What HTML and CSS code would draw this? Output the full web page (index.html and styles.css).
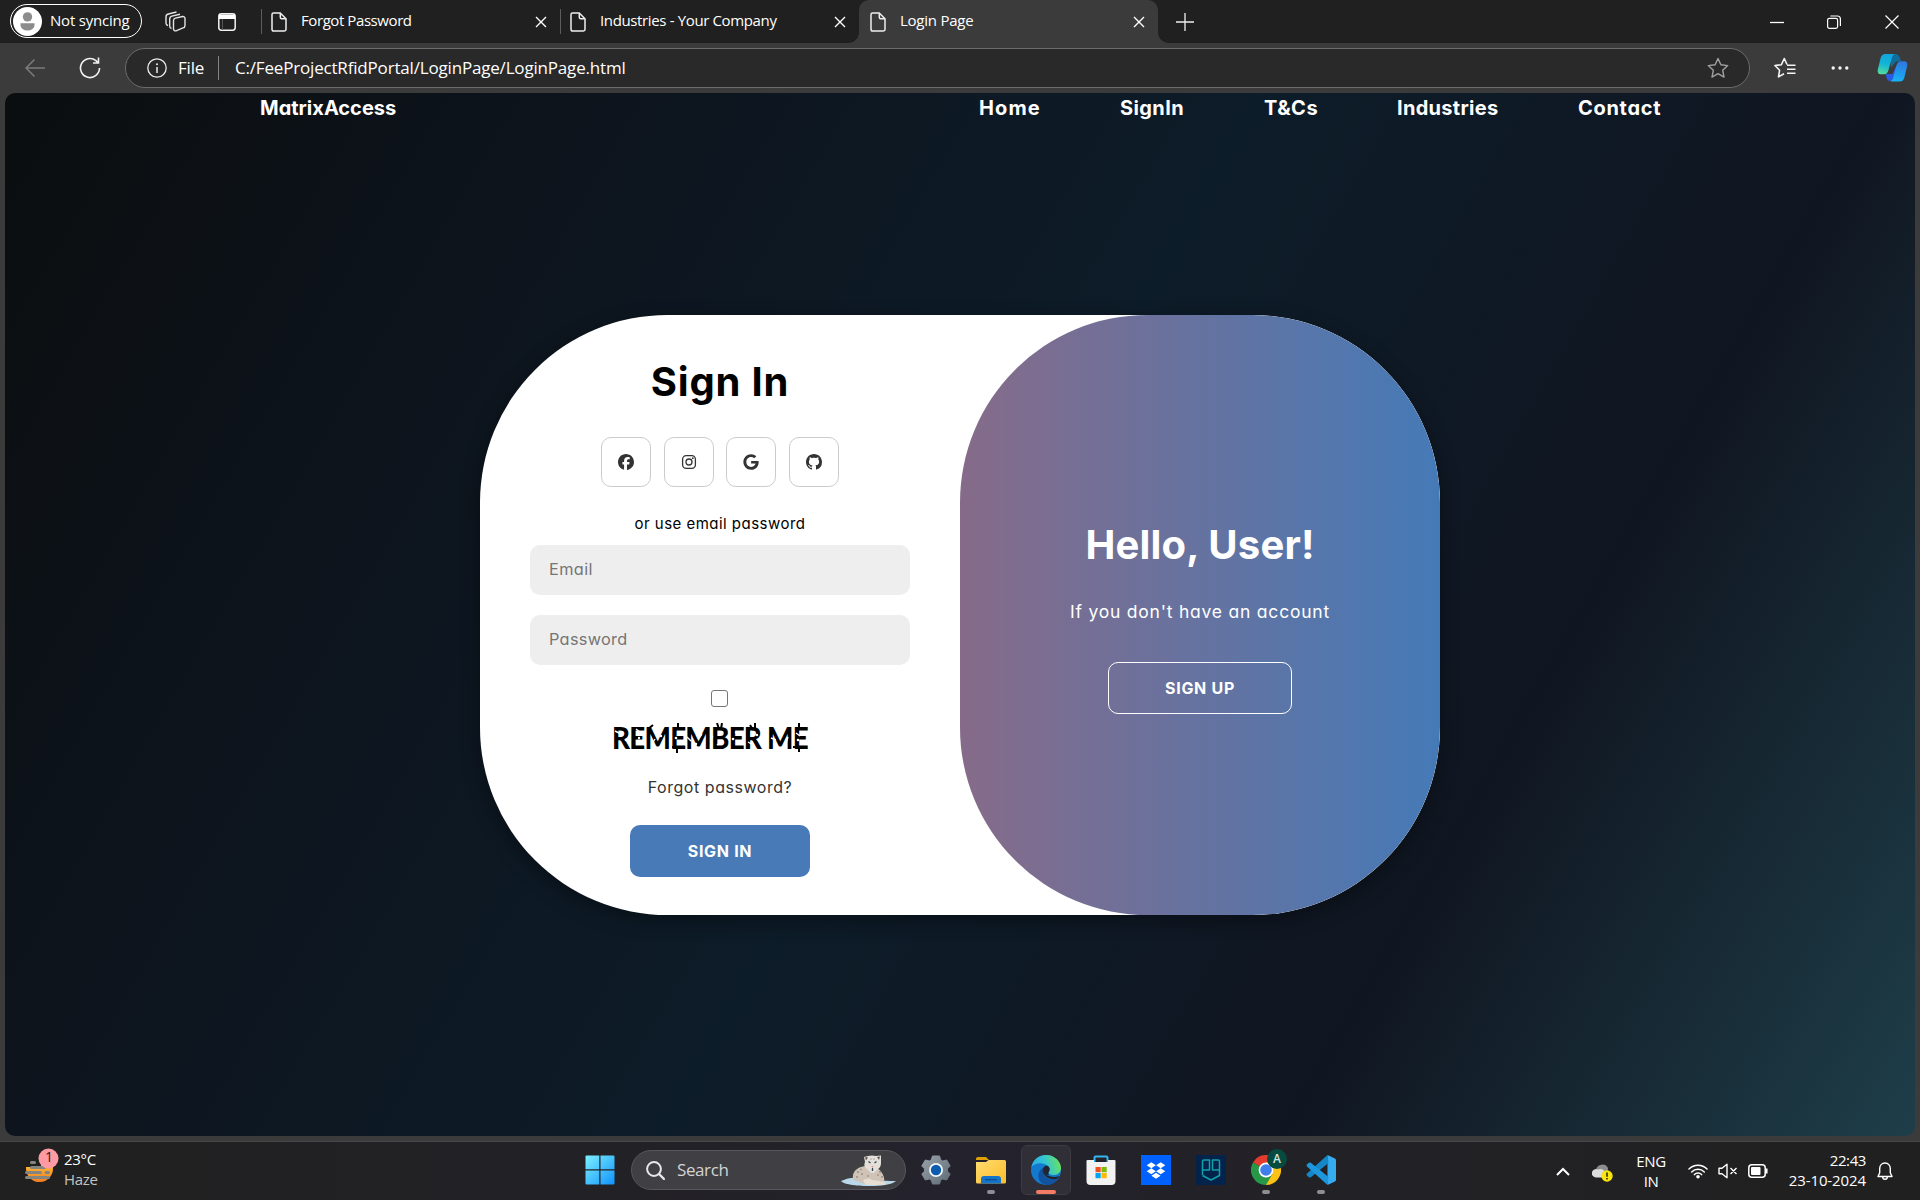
FILE: index.html
```html
<!DOCTYPE html>
<html lang="en">
<head>
<meta charset="utf-8">
<title>Login Page</title>
<link rel="stylesheet" href="styles.css">
</head>
<body>
<svg class="defs" width="0" height="0" aria-hidden="true">
  <defs>
    <symbol id="file" viewBox="0 0 16 20"><path d="M2.500 1h6.700L15 6.800V17.300a1.800 1.800 0 0 1-1.800 1.800H2.800A1.800 1.800 0 0 1 1 17.300V2.500A1.500 1.500 0 0 1 2.500 1zM9.300 1.200V5.200a1.500 1.500 0 0 0 1.500 1.500h4" fill="none" stroke="currentColor" stroke-width="1.500"/></symbol>
    <symbol id="close" viewBox="0 0 12 12"><path d="M1 1l10 10M11 1L1 11" fill="none" stroke="currentColor" stroke-width="1.400"/></symbol>
    <linearGradient id="gWin" x1="0" y1="0" x2="1" y2="1"><stop offset="0" stop-color="#7df0ff"/><stop offset="1" stop-color="#1193fb"/></linearGradient>
    <linearGradient id="gTeal" x1=".5" y1="0" x2=".3" y2="1"><stop offset="0" stop-color="#11a5dc"/><stop offset=".5" stop-color="#12b5d6"/><stop offset="1" stop-color="#55dd9a"/></linearGradient>
    <linearGradient id="gBlue" x1=".6" y1="0" x2=".4" y2="1"><stop offset="0" stop-color="#2f77e0"/><stop offset="1" stop-color="#16b4f4"/></linearGradient>
    <linearGradient id="gGear" x1="0" y1="0" x2="1" y2="1"><stop offset="0" stop-color="#9aa2a9"/><stop offset="1" stop-color="#5d6b76"/></linearGradient>
    <linearGradient id="gFold" x1="0" y1="0" x2="1" y2="1"><stop offset="0" stop-color="#ffdc70"/><stop offset="1" stop-color="#fbbd2a"/></linearGradient>
    <linearGradient id="gEdge" x1="0" y1=".6" x2="1" y2=".4"><stop offset="0" stop-color="#2aa9e6"/><stop offset=".5" stop-color="#35c5d2"/><stop offset="1" stop-color="#6be35a"/></linearGradient>
    <linearGradient id="gSun" x1="0" y1="0" x2="0" y2="1"><stop offset="0" stop-color="#ffc23a"/><stop offset="1" stop-color="#f57c1f"/></linearGradient>
  </defs>
</svg>
<div class="window">
  <header class="titlebar">
    <div class="profile">
      <svg class="avatar" viewBox="0 0 31 31"><circle cx="15.500" cy="15.500" r="15.500" fill="#fff"/><circle cx="15.500" cy="10.500" r="5" fill="#8c8c8c"/><path d="M8 17.500h15v2a7.500 5.500 0 0 1-15 0z" fill="#8c8c8c"/></svg>
      <span>Not syncing</span>
    </div>
    <svg class="workspaces" viewBox="0 0 21 21"><g fill="none" stroke="#e4e4e4" stroke-width="1.400" stroke-linejoin="round"><path d="M8.500 9.500a2.500 2.500 0 0 1 2-2.400L17.600 5.500a2 2 0 0 1 2.400 2v7a2.500 2.500 0 0 1-2 2.400L11 19.800a2 2 0 0 1-2.500-2z"/><path d="M6.500 17.500a2.500 2.500 0 0 1-1.800-2.500V8a3 3 0 0 1 2.300-2.900L15 3.300M3 14.500a2.500 2.500 0 0 1-2-2.300V6A3 3 0 0 1 3.300 3L11.500 1"/></g></svg>
    <svg class="tab-actions" viewBox="0 0 18 18"><rect x=".8" y=".8" width="16.400" height="16.400" rx="2.600" fill="none" stroke="#f2f2f2" stroke-width="1.500"/><path d="M1 1.500h16V6H1z" fill="#fff"/><path d="M4.500 6v11" stroke="#555" stroke-width="1"/></svg>
    <nav class="tabs">
      <div class="tab"><svg class="file"><use href="#file"/></svg><span class="t1">Forgot Password</span><svg class="close"><use href="#close"/></svg></div>
      <div class="tab"><svg class="file"><use href="#file"/></svg><span class="t2">Industries - Your Company</span><svg class="close"><use href="#close"/></svg></div>
      <div class="tab active"><svg class="file"><use href="#file"/></svg><span class="t3">Login Page</span><svg class="close"><use href="#close"/></svg></div>
    </nav>
    <svg class="new-tab" viewBox="0 0 18 18"><path d="M9 0v18M0 9h18" stroke="#f0f0f0" stroke-width="1.300"/></svg>
    <div class="controls">
      <svg viewBox="0 0 14 14"><path d="M0 7.500h14" stroke="#fff" stroke-width="1.300"/></svg>
      <svg viewBox="0 0 14 14"><g fill="none" stroke="#fff" stroke-width="1.200"><rect x=".6" y="3.300" width="10" height="10" rx="1.800"/><path d="M3.400 1h7a3 3 0 0 1 3 3v7"/></g></svg>
      <svg viewBox="0 0 14 14"><path d="M.5.5l13 13M13.500.5l-13 13" stroke="#fff" stroke-width="1.200"/></svg>
    </div>
  </header>
  <div class="toolbar">
    <svg class="back" viewBox="0 0 20 18"><path d="M9.500.5 1 9l8.500 8.500M1 9h19" fill="none" stroke="#7b7b7b" stroke-width="1.500"/></svg>
    <svg class="reload" viewBox="0 0 22 22"><path d="M20.500 11A9.500 9.500 0 1 1 17 3.700l2 2M19.500.5V6H14" fill="none" stroke="#f2f2f2" stroke-width="1.600"/></svg>
    <div class="address">
      <svg class="info" viewBox="0 0 20 20"><circle cx="10" cy="10" r="9.200" fill="none" stroke="#ececec" stroke-width="1.300"/><path d="M10 9v6" stroke="#ececec" stroke-width="1.500"/><circle cx="10" cy="6.200" r="1" fill="#ececec"/></svg>
      <span class="scheme">File</span>
      <i class="bar"></i>
      <span class="url">C:/FeeProjectRfidPortal/LoginPage/LoginPage.html</span>
      <svg class="star" viewBox="0 0 22 22"><path d="M11 1.500l2.900 6.300 6.800.8-5 4.700 1.300 6.800-6-3.400-6 3.400 1.300-6.800-5-4.700 6.800-.8z" fill="none" stroke="#a0a0a0" stroke-width="1.400" stroke-linejoin="round"/></svg>
    </div>
    <svg class="favs" viewBox="0 0 22 22"><path d="M13 7.500 10.300 1.500 7.400 7.700.9 8.500l4.700 4.700-1.100 6.700 5.500-3.200M13 8.200h8.500M13 12.200h8.500M13 16.200h8.500" fill="none" stroke="#f4f4f4" stroke-width="1.600" stroke-linejoin="round"/></svg>
    <svg class="dots" viewBox="0 0 18 4"><g fill="#f4f4f4"><circle cx="2.200" cy="2" r="1.700"/><circle cx="9" cy="2" r="1.700"/><circle cx="15.800" cy="2" r="1.700"/></g></svg>
    <svg class="copilot" viewBox="0 0 30 28"><path d="M12 0h6c2.500 0 3.600 1.700 4.500 4l1 3.500h-5l-5 6z" fill="#0f6d9e"/><path d="M8 20h7l4-9 2 8-3.500 6c-.8 1.300-2 2-4 2h-1c-2 0-3-1.500-3.500-3.500z" fill="#2a5be0"/><path d="M8 0h9c-1.700 1-2.500 3-3 5l-3 11c-.7 2.700-2 4.300-4.500 4.300H3.300C.8 20.300-.3 18.500.3 15.500L3 4.500C3.800 1.500 5 0 8 0z" fill="url(#gTeal)"/><path d="M22 27.500h-9c1.700-1 2.500-3 3-5l3-11C19.700 9 21 7.200 23.500 7.200h3.200c2.500 0 3.600 2 3 4.800L27 23c-.8 3-2 4.500-5 4.500z" fill="url(#gBlue)"/></svg>
  </div>
  <main class="page">
    <nav class="site-nav">
      <a class="brand">MatrixAccess</a>
      <div class="links"><a class="n-home">Home</a><a class="n-sign">SignIn</a><a class="n-terms">T&amp;Cs</a><a class="n-ind">Industries</a><a class="n-con">Contact</a></div>
    </nav>
    <section class="card">
      <form class="form">
        <h1>Sign In</h1>
        <div class="social">
          <a><svg viewBox="0 0 512 512"><path d="M512 256C512 114.600 397.400 0 256 0S0 114.600 0 256C0 376 82.700 476.800 194.200 504.500V334.200H141.400V256h52.800V222.300c0-87.100 39.400-127.500 125-127.500c16.200 0 44.200 3.200 55.700 6.400V172c-6-.6-16.500-1-29.600-1c-42 0-58.200 15.900-58.200 57.200V256h83.600l-14.400 78.200H286.700V510.100C413.800 494.800 512 386.900 512 256z"/></svg></a>
          <a><svg viewBox="0 0 16 16"><rect x="1.600" y="1.600" width="12.800" height="12.800" rx="3.600" fill="none" stroke="#333" stroke-width="1.300"/><circle cx="8" cy="8" r="3" fill="none" stroke="#333" stroke-width="1.300"/><circle cx="11.800" cy="4.200" r=".9"/></svg></a>
          <a><svg viewBox="-12 0 512 512"><path d="M488 261.800C488 403.300 391.100 504 248 504 110.800 504 0 393.200 0 256S110.800 8 248 8c66.800 0 123 24.500 166.300 64.900l-67.500 64.900C258.500 52.600 94.300 116.600 94.300 256c0 86.500 69.100 156.600 153.700 156.600 98.200 0 135-70.400 140.800-106.900H248v-85.300h236.100c2.300 12.700 3.900 24.900 3.900 41.400z"/></svg></a>
          <a><svg viewBox="0 0 16 16"><path d="M8 0C3.580 0 0 3.580 0 8c0 3.540 2.290 6.530 5.470 7.590.4.070.55-.17.55-.38 0-.19-.01-.82-.01-1.490-2.010.37-2.530-.49-2.690-.94-.09-.23-.48-.94-.82-1.130-.28-.15-.68-.52-.01-.53.63-.01 1.080.58 1.230.82.72 1.210 1.870.87 2.330.66.07-.52.28-.87.51-1.070-1.780-.2-3.640-.89-3.640-3.950 0-.87.31-1.590.82-2.150-.08-.2-.36-1.020.08-2.120 0 0 .67-.21 2.200.82.640-.18 1.320-.27 2-.27.680 0 1.360.09 2 .27 1.530-1.040 2.200-.82 2.200-.82.440 1.100.16 1.920.08 2.120.51.560.82 1.270.82 2.150 0 3.070-1.870 3.750-3.650 3.950.29.250.54.730.54 1.480 0 1.070-.01 1.930-.01 2.200 0 .210.150.460.55.380A8.013 8.013 0 0 0 16 8c0-4.420-3.580-8-8-8z"/></svg></a>
        </div>
        <p class="hint">or use email password</p>
        <input class="email" type="email" placeholder="Email">
        <input class="pass" type="password" placeholder="Password">
        <span class="check"></span>
        <label class="remember"><span>REMEMBER ME</span>
          <svg class="marks" viewBox="0 0 196 30"><g fill="none" stroke="#000" stroke-width="2"><path d="M66 0v6M65 25v5M187 0v6M187 24v5M105 0l2 6M110 0l-1 6M138 2l3 5M143 0v6M36 6l5-4M60 24h12M181 24h14"/></g><g fill="none" stroke="#fff" stroke-width="1.400"><path d="M3 8l4 2M24 6l4 3M40 21l3-5M75 14l4 4M90 11l-3 4M105 22l5-4M123 9l4 2M136 19l5 3M159 15l5 2M174 20l2-6M184 10l4 3"/></g><g fill="#fff"><circle cx="14" cy="17" r="1.300"/><circle cx="27" cy="15" r="1.200"/><circle cx="49" cy="13" r="1.200"/><circle cx="64" cy="15" r="1.300"/><circle cx="84" cy="21" r="1.200"/><circle cx="100" cy="14" r="1.200"/><circle cx="121" cy="16" r="1.300"/><circle cx="145" cy="12" r="1.200"/><circle cx="186" cy="17" r="1.300"/></g></svg>
        </label>
        <a class="forgot">Forgot password?</a>
        <button type="button" class="btn">SIGN IN</button>
      </form>
      <aside class="panel">
        <h1>Hello, User!</h1>
        <p>If you don't have an account</p>
        <button type="button" class="btn outline">SIGN UP</button>
      </aside>
    </section>
  </main>
</div>
<footer class="taskbar">
  <div class="weather">
    <svg viewBox="0 0 36 38"><path d="M1 22a13.500 13.500 0 0 0 27-1l1-6H16v5H1z" fill="url(#gSun)"/><g stroke="#85857f" stroke-width="3" stroke-linecap="round"><path d="M6.500 15.500h3M6.500 20.500h13M1.500 25.500h14M21 25.500h2.500M1.500 30.500h22"/></g><circle cx="23.500" cy="11.500" r="10" fill="#ff99a4"/></svg>
    <b>1</b>
    <div><span>23°C</span><span class="dim">Haze</span></div>
  </div>
  <div class="apps">
    <a class="tile"><svg viewBox="0 0 30 30"><path d="M.5 1.500q0-1 1-1H14.300V14.300H.5zM15.500.5h13q1 0 1 1V14.300H15.500zM.5 15.500H14.300V29.500H1.500q-1 0-1-1zM15.500 15.500h14v13q0 1-1 1h-13z" fill="url(#gWin)"/></svg></a>
    <div class="search">
      <svg class="lens" viewBox="0 0 19 19"><circle cx="8" cy="8" r="6.900" fill="none" stroke="#e8e8e8" stroke-width="2"/><path d="M13 13l5 5" stroke="#e8e8e8" stroke-width="2.400" stroke-linecap="round"/></svg>
      <span>Search</span>
      <svg class="leopard" viewBox="0 0 55 31"><path d="M0 26c6-3 12-4 20-3 10 1 20 3 35 3-4 4-16 5-26 5S3 30 0 26z" fill="#b9d9ea"/><path d="M12 25c-1-7 2-11 8-13l8-2 8 3c5 3 8 9 7 13l-4 3H24z" fill="#cfc3b8"/><path d="M22 26c3-3 6-3 9-1l7 1 6 1c2 3-2 3-6 3H25z" fill="#e6ddd3"/><path d="M23 2l4-1q4-1 8 0l5-.5V8q0 4-3 6l-4 4h-3l-4-4q-4-3-2-7z" fill="#e5dfd9"/><path d="M24 2l3 .5-2 3zM39 1.500l-3 .5 2 3z" fill="#5d5552"/><path d="M27.500 6.500l2 1.500M35.500 6.500l-2 1.500M31.500 13v3" stroke="#33475a" stroke-width="1.300"/><path d="M30.300 11h2.400l-1.200 1.800z" fill="#e08b86"/><g fill="#77695f"><circle cx="17" cy="17" r=".8"/><circle cx="20" cy="14.500" r=".7"/><circle cx="21" cy="19" r=".8"/><circle cx="39" cy="17" r=".8"/><circle cx="37" cy="20" r=".7"/><circle cx="41" cy="22" r=".8"/><circle cx="27" cy="21" r=".7"/><circle cx="30" cy="4" r=".6"/><circle cx="33" cy="4" r=".6"/><circle cx="16" cy="22" r=".8"/></g></svg>
    </div>
    <a class="tile"><svg viewBox="0 0 30 30"><path d="M11.500 1h7l1.200 3.800 2 1.200 4-1 3.500 6-2.700 2.800v2.400L29.200 19l-3.500 6-4-1-2 1.200L18.500 29h-7l-1.200-3.800-2-1.200-4 1-3.500-6 2.700-2.800v-2.400L.8 11l3.500-6 4 1 2-1.200z" fill="url(#gGear)" stroke="url(#gGear)" stroke-linejoin="round"/><circle cx="15" cy="15" r="7" fill="#f3f5f7"/><circle cx="15" cy="15" r="5.200" fill="#0b5cad"/></svg></a>
    <a class="tile"><svg viewBox="0 0 30 30"><path d="M0 4q0-2 2-2h8l3 3H0z" fill="#e0a106"/><path d="M0 7h10l2.500-2H28.500Q30 5 30 6.500V27q0 1.500-1.500 1.500h-27Q0 28.500 0 27z" fill="url(#gFold)"/><path d="M5 28.500V24q0-3 3-3h14q3 0 3 3v4.500z" fill="#1374c9"/><path d="M9 24.700h12" stroke="#0b4a86" stroke-width="1.200"/></svg><i></i></a>
    <a class="tile current"><svg viewBox="0 0 30 30"><circle cx="15" cy="15" r="15" fill="#1279cf"/><path d="M.3 12.500C1.500 5 7.500 0 15 0c8.500 0 15 6.500 15 13 0 4-3 7-7 7-3.500 0-6-1.200-5.500-2.700 1.700-2 1.500-4.500-.5-6.300C12.500 7 4 7.500.3 12.500z" fill="url(#gEdge)"/><path d="M12 15c-.8 5 4.500 9.500 9.500 9.500 2.500 0 4.500-.6 6.300-1.500C25 27.500 20.500 30 15.500 30 9.500 29.300 6.500 24 7.500 19c.5-3 3-6 6.500-7-1.200 1-1.800 2-2 3z" fill="#11539e"/><path d="M12.500 13c-1 2.500.8 6 4 7.500 3 1.500 8.500 2 11.800.5l-.8 2c-2 1-4 1.500-6.500 1.200-5-.7-9-4.700-9.200-7.700-.1-1.500.1-2.500.7-3.500z" fill="#24232b"/><path d="M17.500 17.300c1.700-2 1.500-4.500-.5-6.300-3-1-4.700 1-5 4 .5 3 3 5 5.500 5.500z" fill="#24232b"/></svg><i></i></a>
    <a class="tile"><svg viewBox="0 0 30 30"><path d="M8.500 7V2.500q0-1 1-1h11q1 0 1 1V7" fill="none" stroke="#36b6ee" stroke-width="2"/><path d="M.5 6q0-1 1-1H8v2h14V5h6.500q1 0 1 1v20q0 4-4 4h-21q-4 0-4-4z" fill="#f2f2f2"/><path d="M9.500 12h5.200v5.200H9.500z" fill="#f25022"/><path d="M15.500 12h5.200v5.200h-5.200z" fill="#7fba00"/><path d="M9.500 18h5.200v5.200H9.500z" fill="#00a4ef"/><path d="M15.500 18h5.200v5.200h-5.200z" fill="#ffb900"/></svg></a>
    <a class="tile"><svg viewBox="0 0 30 30"><path d="M0 0h30v30H0z" fill="#0061ff"/><path d="M10.300 7.300l4.600 3-4.600 3-4.600-3zM19.700 7.300l4.600 3-4.600 3-4.600-3zM10.300 13.300l4.600 3-4.600 3-4.600-3zM19.700 13.300l4.600 3-4.600 3-4.600-3zM15 17.700l4.600 3-4.600 3-4.600-3z" fill="#fff"/></svg></a>
    <a class="tile"><svg viewBox="0 0 30 30"><path d="M0 0h30v30H0z" fill="#04234a"/><g fill="none" stroke="#11a0ad" stroke-width="1.500" stroke-linejoin="round"><path d="M6.500 20V6.500Q6.500 5 8 5h5.500v10H6.500M23.500 15h-7V5H22q1.500 0 1.500 1.500V20.500l-8.500 4.500-8.500-4.500"/></g></svg></a>
    <a class="tile chrome"><svg viewBox="0 0 30 30"><path d="M15 15 2 7.500A15 15 0 0 1 28 7.500z" fill="#e33b2e"/><path d="M15 15V7.500h13A15 15 0 0 1 15 30z" fill="#fbc116"/><path d="M15 15l6.500 3.800L15 30A15 15 0 0 1 2 7.500z" fill="#279847"/><circle cx="15" cy="15" r="7.400" fill="#fff"/><circle cx="15" cy="15" r="5.800" fill="#3f7fec"/></svg><em>A</em><i></i></a>
    <a class="tile"><svg viewBox="0 0 30 30"><path d="M21.500 0 29 3.500q1 .5 1 1.700v19.600q0 1.200-1 1.700L21.500 30z" fill="#36abee"/><path d="M21.500 0 1 18.500q-1 1 0 2l1.800 1.700q1 .8 2 0L22.500 8z" fill="#1487c9"/><path d="M21.500 30 1 11.500q-1-1 0-2l1.800-1.700q1-.8 2 0L22.500 22z" fill="#1e96dc"/></svg><i></i></a>
  </div>
  <div class="tray">
    <svg class="up" viewBox="0 0 14 9"><path d="M1 8l6-6 6 6" fill="none" stroke="#fff" stroke-width="2"/></svg>
    <svg class="cloud" viewBox="0 0 21 18"><path d="M4 13a4 4 0 0 1 0-7.500A6.500 6.500 0 0 1 16 4l-1 9z" fill="#8d8d8d"/><path d="M4 13.500A4.200 4.200 0 1 1 6 5.600c3-1.500 6 0 7 3l-1 5z" fill="#dcdcdc"/><circle cx="15" cy="12" r="5.700" fill="#f9e40c"/><path d="M15 8.500v4.200M15 14v1.600" stroke="#222" stroke-width="1.500"/></svg>
    <div class="lang"><span>ENG</span><span>IN</span></div>
    <svg class="wifi" viewBox="0 0 20 16"><g fill="none" stroke="#fff" stroke-width="1.500" stroke-linecap="round"><path d="M1 6a12.500 12.500 0 0 1 18 0M3.700 8.900a8.700 8.700 0 0 1 12.600 0M6.400 11.600a5 5 0 0 1 7.200 0"/></g><circle cx="10" cy="13.800" r="1.800" fill="#fff"/></svg>
    <svg class="speaker" viewBox="0 0 20 16"><g fill="none" stroke="#fff" stroke-width="1.400" stroke-linejoin="round"><path d="M1 5.200h3L9 1.200v13.600l-5-4H1zM12.500 5l6 6M18.500 5l-6 6"/></g></svg>
    <svg class="battery" viewBox="0 0 20 14"><rect x=".8" y=".8" width="16.400" height="12.400" rx="3" fill="none" stroke="#fff" stroke-width="1.500"/><rect x="3" y="3" width="9.500" height="8" rx="1" fill="#fff"/><path d="M18.300 4.500v5" stroke="#fff" stroke-width="2.500"/></svg>
    <div class="clock"><span class="c1">22:43</span><span class="c2">23-10-2024</span></div>
    <svg class="bell" viewBox="0 0 16 19"><path d="M8 1C4.800 1 2.700 3.500 2.700 6.500v4.300L1 14.500h14l-1.700-3.700V6.500C13.300 3.500 11.200 1 8 1zM5.700 15c0 3 4.600 3 4.600 0" fill="none" stroke="#fff" stroke-width="1.400" stroke-linejoin="round"/></svg>
  </div>
</footer>
</body>
</html>
```
FILE: styles.css
```css
* { box-sizing: border-box; margin: 0; padding: 0; }
body {
  width: 1920px;
  height: 1200px;
  overflow: hidden;
  background: #3b3b3b;
  color: #fff;
  font: 15px "Open Sans", "Noto Sans", sans-serif;
}
svg { display: block; flex: none; }
.defs { position: absolute; }
.window { height: 1141px; display: flex; flex-direction: column; }

/* Title bar */
.titlebar { height: 43px; background: #202020; display: flex; align-items: center; padding-left: 10px; }
.profile {
  width: 132px; height: 34px; border: 1.500px solid #fff; border-radius: 17px;
  display: flex; align-items: center; gap: 8px; margin-bottom: 1px; line-height: 30px;
  white-space: nowrap; letter-spacing: -.2px;
}
.avatar { width: 29px; height: 29px; margin-left: 2px; }
.profile span { height: 32px; }
.workspaces { width: 21px; height: 21px; margin: 0 0 1px 23px; }
.tab-actions { width: 18px; height: 18px; margin: 0 25px 0 32px; }
.tabs { display: flex; align-self: stretch; }
.tab { width: 299px; display: flex; align-items: center; padding: 0 13px 0 9px; position: relative; }
.tab::before { content: ""; width: 1px; height: 25px; background: #5c5c5c; margin: 0 9px 0 -9px; flex: none; }
.tab span { flex: 1; margin-left: 14px; line-height: 41px; height: 43px; white-space: nowrap; }
.t1 { letter-spacing: -.42px; }
.t2 { letter-spacing: -.36px; }
.t3 { letter-spacing: -.25px; }
.file { width: 16px; height: 20px; color: #eee; }
.close { width: 12px; height: 12px; color: #fff; }
.tab.active { background: #3b3b3b; border-radius: 10px 10px 0 0; }
.tab.active::before {
  position: absolute; left: -1px; bottom: 0; width: 10px; height: 10px;
  background: radial-gradient(circle at 0 0, #202020 9.500px, #3b3b3b 10px);
}
.tab.active .file { margin-left: 2px; }
.tab.active::after {
  content: ""; position: absolute; right: -10px; bottom: 0; width: 10px; height: 10px;
  background: radial-gradient(circle at 100% 0, #202020 9.500px, #3b3b3b 10px);
}
.new-tab { width: 18px; height: 18px; margin-left: 18px; }
.controls { margin-left: auto; display: flex; gap: 43.500px; padding-right: 21.500px; }
.controls svg { width: 14px; height: 14px; }

/* Toolbar */
.toolbar { height: 50px; display: flex; align-items: center; padding: 0 12px 0 25px; background: #3b3b3b; }
.back { width: 20px; height: 18px; }
.reload { width: 22px; height: 22px; margin: 0 24px 0 34px; }
.address {
  width: 1625px; height: 40px; border: 1px solid #6b6b6b; border-radius: 20px; background: #292929;
  display: flex; align-items: center; padding: 0 20px 0 21px; font-size: 17px; line-height: 37px;
}
.address span { height: 38px; white-space: nowrap; }
.info { width: 20px; height: 20px; }
.scheme { margin-left: 11px; width: 26px; letter-spacing: -.2px; }
.bar { width: 1px; height: 24px; background: #858585; margin: 0 16px 0 14px; }
.url { letter-spacing: -.18px; }
.star { width: 22px; height: 22px; margin-left: auto; }
.favs { width: 22px; height: 22px; margin-left: 24px; }
.dots { width: 18px; height: 4px; margin-left: 35px; }
.copilot { width: 31px; height: 28px; margin-left: auto; }

/* Web page */
.page {
  height: 1043px; margin: 0 5px; border-radius: 10px; overflow: hidden;
  background: linear-gradient(120deg, #0b0e0f 0%, #0d131b 20%, #0d1c29 50%, #101621 75%, #1e3e49 100%);
  font-family: Inter, "Noto Sans", sans-serif;
  font-feature-settings: "cv11";
}
.site-nav { display: flex; justify-content: space-between; padding: 1px 253px 0 255px; font-size: 20px; font-weight: 700; line-height: 29px; }
.links { display: flex; gap: 77px; }
.n-home { letter-spacing: 1.100px; width: 64px; }
.n-sign { letter-spacing: .4px; width: 67px; }
.n-terms { letter-spacing: .5px; width: 56px; }
.n-ind { letter-spacing: .3px; width: 104px; }
.n-con { letter-spacing: .7px; width: 84px; }
.card {
  width: 960px; height: 600px; margin: 192px auto 0; border-radius: 187.500px;
  background: #fff; overflow: hidden; display: flex; box-shadow: 0 6px 19px rgba(0, 0, 0, .4);
}
.form { width: 480px; padding: 37px 50px 0; display: flex; flex-direction: column; align-items: center; color: #000; }
h1 { font-size: 40px; line-height: 60px; font-weight: 700; }
.form h1 { letter-spacing: .8px; }
.social { display: flex; gap: 12.700px; margin-top: 25px; }
.social a { width: 50px; height: 50px; border: 1px solid #ccc; border-radius: 10px; display: grid; place-items: center; }
.social svg { width: 16px; height: 16px; fill: #333; }
.hint { margin-top: 25px; font-size: 15px; line-height: 23px; letter-spacing: .47px; }
input { width: 380px; height: 50px; border: 0; border-radius: 10px; background: #eee; padding: 0 19px 2px; font: 16.300px Inter, sans-serif; font-feature-settings: "cv11"; }
input::placeholder { color: #757575; }
.email { margin-top: 10px; letter-spacing: .4px; }
.pass { margin-top: 20px; letter-spacing: .3px; }
.check { width: 17px; height: 17px; border: 1.500px solid #767676; border-radius: 3px; margin: 25px 1px 0 0; }
.remember { position: relative; margin: 10px 20px 0 0; width: 196px; height: 40px; white-space: nowrap; }
.remember span { display: block; width: 212px; font: 900 30px/40px Lato, sans-serif; letter-spacing: -.8px; transform: scaleX(.925); transform-origin: 0 50%; }
.marks { position: absolute; left: 0; top: 6px; width: 196px; height: 30px; }
.forgot { margin-top: 18px; font-size: 16px; line-height: 24px; letter-spacing: .55px; color: #333; }
.btn {
  width: 180px; height: 52px; margin-top: 26px; border: 0; border-radius: 10px; background: #477ab6; color: #fff;
  font: 700 16px/52px Inter, sans-serif; letter-spacing: .7px;
}
.panel {
  width: 480px; border-radius: 187.500px; padding-top: 200px; display: flex; flex-direction: column; align-items: center;
  background: linear-gradient(to right, #866b89, #457ab7);
}
.panel h1 { letter-spacing: .2px; }
.panel p { margin-top: 24px; font-size: 17.500px; line-height: 26px; letter-spacing: .78px; }
.panel .btn { margin-top: 37px; }
.btn.outline { width: 184px; border: 1px solid #fff; background: transparent; line-height: 50px; }

/* Taskbar */
.taskbar { height: 59px; border-top: 1px solid #48484a; background: linear-gradient(90deg, #202020 0, #222125 30%, #24222c 50%, #222125 70%, #202020 100%); display: flex; }
.weather { width: 575px; display: flex; position: relative; padding: 5px 0 0 25px; }
.weather > svg { width: 36px; height: 38px; }
.weather b { position: absolute; left: 39px; top: 5px; width: 20px; text-align: center; font: 14px/20px "Open Sans", sans-serif; color: #222; }
.weather div { padding: 2px 0 0 3px; letter-spacing: -.3px; }
.weather span, .lang span, .clock span { display: block; line-height: 20px; }
.dim { color: #c4c4c4; }
.apps { display: flex; gap: 5px; padding-top: 3px; }
.tile { width: 50px; height: 50px; display: grid; place-items: center; position: relative; border-radius: 6px; }
.tile svg { width: 30px; height: 30px; }
.tile i { position: absolute; bottom: 1px; left: 21px; width: 8px; height: 4px; border-radius: 2px; background: #8e8e92; }
.tile.current { background: #302f37; border: 1px solid #3c3b42; }
.tile.current i { left: 14px; width: 20px; bottom: 0; background: #f57c64; }
.chrome em { position: absolute; left: 26px; top: 4px; width: 20px; height: 20px; border-radius: 10px; background: #064a40; font: 600 12px/20px "Open Sans", sans-serif; text-align: center; color: #cfe3de; }
.search {
  width: 275px; height: 40px; margin: 5px 0 0 1px; border: 1px solid #57565c; border-radius: 20px; background: #403f44;
  display: flex; align-items: center; padding: 0 9px 0 14px; font-size: 17px; color: #d4d4d4; letter-spacing: -.4px;
}
.search span { margin-left: 12px; line-height: 38px; height: 38px; }
.lens { width: 19px; height: 19px; }
.leopard { width: 55px; height: 31px; margin-left: auto; }
.tray { margin-left: auto; display: flex; align-items: center; padding-right: 27px; }
.up { width: 14px; height: 9px; }
.cloud { width: 21px; height: 18px; margin: 4px 22px 0; }
.lang { width: 32px; text-align: center; letter-spacing: -.4px; margin-top: 0; }
.wifi { width: 20px; height: 16px; margin: 0 10px 0 21px; }
.speaker { width: 20px; height: 16px; }
.battery { width: 20px; height: 14px; margin-left: 10px; }
.clock { width: 98px; text-align: right; margin-top: -2px; }
.c1 { letter-spacing: -.4px; }
.c2 { letter-spacing: -.1px; }
.bell { width: 16px; height: 19px; margin: 0 0 0 11px; }
```
